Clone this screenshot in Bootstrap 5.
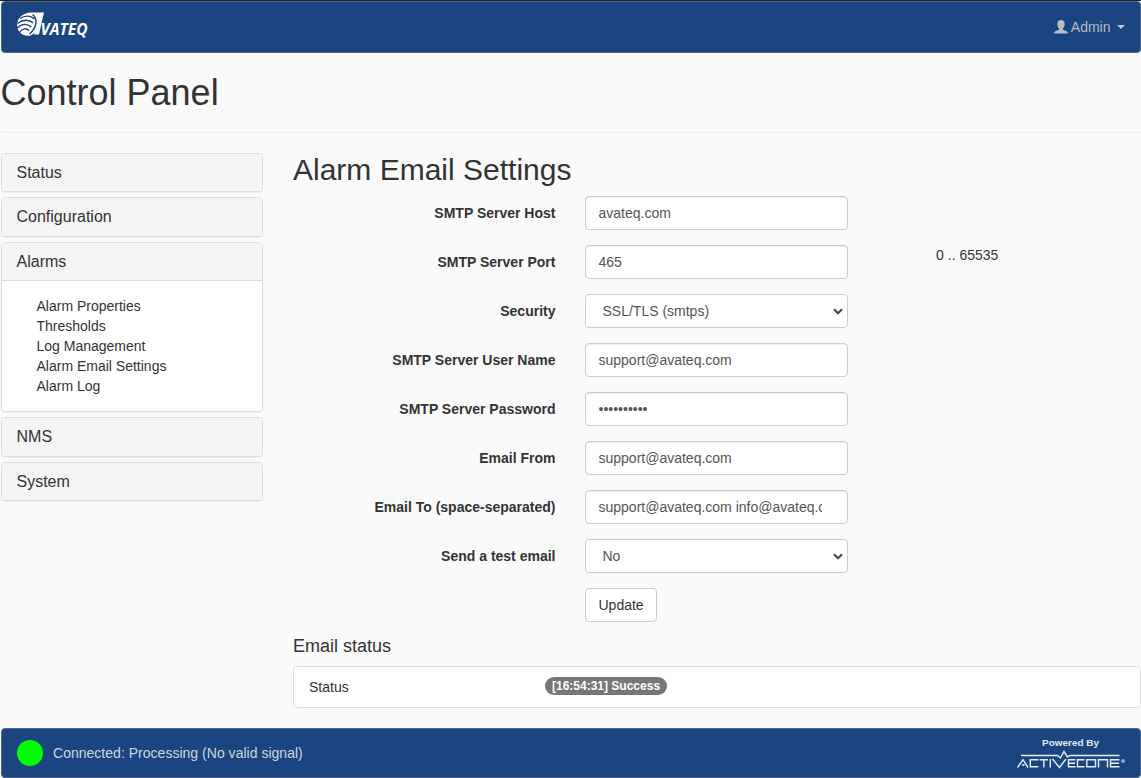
<!DOCTYPE html>
<html lang="en">
<head>
<meta charset="utf-8">
<title>Control Panel</title>
<meta name="viewport" content="width=device-width, initial-scale=1">
<link href="https://cdn.jsdelivr.net/npm/bootstrap@5.3.0/dist/css/bootstrap.min.css" rel="stylesheet">
<style>
html,body{overflow:hidden}
body{font-family:"Liberation Sans",Arial,sans-serif;font-size:14px;line-height:20px;color:#333;background:#fafafa;border-top:1px solid #24202a}
.page{width:1140px;margin-left:.5px}
.page .row{--bs-gutter-x:30px}
h1,h2,h4{font-weight:400;line-height:1.1}
h1{font-size:36px}
h2{font-size:30px;margin:0 0 10px}
h4{font-size:18px;margin:0 0 10px}
.bar{background:#1a4580;border:1px solid #52688a;border-radius:4px;color:#d0d5dc}
.topbar{height:52px;padding:0 15px}
.topbar .brand{margin-top:-5px}
.footbar{height:50px;padding:0 14px 0 15px;margin-top:20px}
.user{color:#b9bcc0}
.user svg{margin-right:3px}
.caret{border:4px solid transparent;border-top-color:#c6c9cd;border-bottom:0;margin-left:6px}
.title-block{padding:20px 0 9px;border-bottom:1px solid #eee;margin-bottom:19.6px;height:80px}
.pane{background:#fff;border:1px solid #ddd;border-radius:4px;box-shadow:0 1px 1px rgba(0,0,0,.05);margin-bottom:5px;overflow:hidden}
.pane-head{background:#f4f4f4;padding:10px 15px;font-size:16px;line-height:17.6px}
.pane-body{border-top:1px solid #ddd;padding:14.6px 15px 15px 35px}
.field{margin-bottom:15px}
.field label{font-weight:700;padding-top:7px}
.form-control,.form-select{font-size:14px;line-height:20px;height:34px;padding:6px 12px;border:1px solid #ccc;border-radius:4px;color:#555;box-shadow:inset 0 1px 1px rgba(0,0,0,.075)}
.form-select{padding-left:16px;box-shadow:none;background-image:url("data:image/svg+xml,%3Csvg xmlns='http://www.w3.org/2000/svg' viewBox='0 0 10 7'%3E%3Cpath d='M1 1.3l4 4 4-4' fill='none' stroke='%23444' stroke-width='2'/%3E%3C/svg%3E");background-size:10px 7px;background-position:right 4px top 13px}
.mail-to{padding-right:25px}
.range{padding-left:0}
.btn-update{font-size:14px;line-height:20px;padding:6px 12px;border:1px solid #ccc;border-radius:4px;background:#fff;color:#333}
.status-list{--bs-list-group-border-color:#ddd;--bs-list-group-border-radius:4px;--bs-list-group-color:#333}
.status-list .list-group-item{height:41.6px;padding:10px 15px}
.status-name{width:236px}
.status-badge{background:#777;border-radius:10px;font-size:12px;line-height:12px;padding:3px 7px;height:18px;align-self:flex-start}
.led{width:26px;height:26px;border-radius:50%;background:#0f0}
.link-state{margin-left:10.5px;letter-spacing:.02px}
</style>
</head>
<body>
<div class="page">
  <nav class="bar topbar d-flex justify-content-between align-items-center">
    <svg class="brand" width="74" height="28" viewBox="0 0 74 28" fill="#fff">
      <path d="M9 2.500Q11 1.500 14 1.500H27L22 23.500H17L17.800 21.500C15.500 24 13 25 10 24.800C3 24 0 19 .2 13C.5 8 4 4 9 2.500Z"/>
      <g fill="none" stroke="#1a4580">
        <path stroke-width="1.300" d="M3 7.500C8 4 14 4.500 17.500 8M.5 12.500C6 8 12.500 8.500 16.300 12M.3 17C5 12 10.500 12.500 14.300 16M2.500 21.500C5.500 16.800 9.500 17 12 19.500"/>
        <path stroke-width="1.500" d="M15.500 3.500C21 7.500 20 16.500 12.500 23"/>
      </g>
      <text x="23.500" y="23.500" font-family="Open Sans,sans-serif" font-size="16.500" font-weight="700" font-style="italic" textLength="47" lengthAdjust="spacingAndGlyphs">VATEQ</text>
    </svg>
    <div class="user d-flex align-items-center">
      <svg width="14" height="14" viewBox="0 0 14 14" fill="currentColor"><path d="M3.400 3.500Q3.400 0 7 0t3.600 3.500V5Q10.200 7.500 9 8.500v1.300l3.800 1.400Q14 12 14 13.500H0q0-1.500 1.200-2.300L5 9.800V8.500Q3.800 7.500 3.400 5Z"/></svg>
      <span>Admin</span><span class="caret"></span>
    </div>
  </nav>
  <header class="title-block"><h1 class="m-0">Control Panel</h1></header>
  <div class="row">
    <aside class="col-3">
      <div class="pane"><div class="pane-head">Status</div></div>
      <div class="pane"><div class="pane-head">Configuration</div></div>
      <div class="pane"><div class="pane-head">Alarms</div>
        <div class="pane-body">
          <div>Alarm Properties</div><div>Thresholds</div><div>Log Management</div><div>Alarm Email Settings</div><div>Alarm Log</div>
        </div>
      </div>
      <div class="pane"><div class="pane-head">NMS</div></div>
      <div class="pane"><div class="pane-head">System</div></div>
    </aside>
    <main class="col-9">
      <h2>Alarm Email Settings</h2>
      <form>
        <div class="row field"><label class="col-4 text-end">SMTP Server Host</label><div class="col-4"><input class="form-control" value="avateq.com"></div></div>
        <div class="row field"><label class="col-4 text-end">SMTP Server Port</label><div class="col-4"><input class="form-control" value="465"></div><div class="col-3 offset-1 range">0 .. 65535</div></div>
        <div class="row field"><label class="col-4 text-end">Security</label><div class="col-4"><select class="form-select"><option>SSL/TLS (smtps)</option></select></div></div>
        <div class="row field"><label class="col-4 text-end">SMTP Server User Name</label><div class="col-4"><input class="form-control" value="support@avateq.com"></div></div>
        <div class="row field"><label class="col-4 text-end">SMTP Server Password</label><div class="col-4"><input type="password" class="form-control" value="smtppasswd"></div></div>
        <div class="row field"><label class="col-4 text-end">Email From</label><div class="col-4"><input class="form-control" value="support@avateq.com"></div></div>
        <div class="row field"><label class="col-4 text-end">Email To (space-separated)</label><div class="col-4"><input class="form-control mail-to" value="support@avateq.com info@avateq.com"></div></div>
        <div class="row field"><label class="col-4 text-end">Send a test email</label><div class="col-4"><select class="form-select"><option>No</option></select></div></div>
        <div class="row field"><div class="col-4 offset-4"><button type="button" class="btn btn-update">Update</button></div></div>
      </form>
      <h4>Email status</h4>
      <div class="list-group status-list">
        <div class="list-group-item d-flex"><span class="status-name">Status</span><span class="badge status-badge">[16:54:31] Success</span></div>
      </div>
    </main>
  </div>
  <footer class="bar footbar d-flex align-items-center">
    <span class="led"></span>
    <span class="link-state">Connected: Processing (No valid signal)</span>
    <svg class="ms-auto" width="110" height="36" viewBox="0 0 110 36">
      <text x="26" y="11" font-family="Liberation Sans,sans-serif" font-size="9.500" font-weight="700" fill="#e3e7ed" textLength="57" lengthAdjust="spacingAndGlyphs">Powered By</text>
      <g fill="none" stroke="#e8edf5" stroke-width="1.400">
        <path d="M5 20.500H41.500L44.500 23 48 16.500 51.500 22 54 20.500H103.500"/>
        <path d="M1.500 32.500L7 24.700 12 32.500M6 30H8.500M22.300 24.700H14.300V31.800H22.300M23.500 24.700H32M27.800 24.700V32.500M34.300 24V32.500M36.500 24L43.500 32.500 50 24M59.500 24.700H52.500V31.800H59.500M52.500 28.200H59M68.500 24.700H61.500V31.800H68.500M70.800 24.700H79.500V31.800H70.800ZM82.500 32.500V24.700H91.500V32.500M103.500 24.700H94.500V31.800H103.500M94.500 28.200H103"/>
      </g>
      <circle cx="107" cy="26" r="2" fill="#91a7c5"/>
    </svg>
  </footer>
</div>
<script src="https://cdn.jsdelivr.net/npm/bootstrap@5.3.0/dist/js/bootstrap.bundle.min.js"></script>
</body>
</html>
